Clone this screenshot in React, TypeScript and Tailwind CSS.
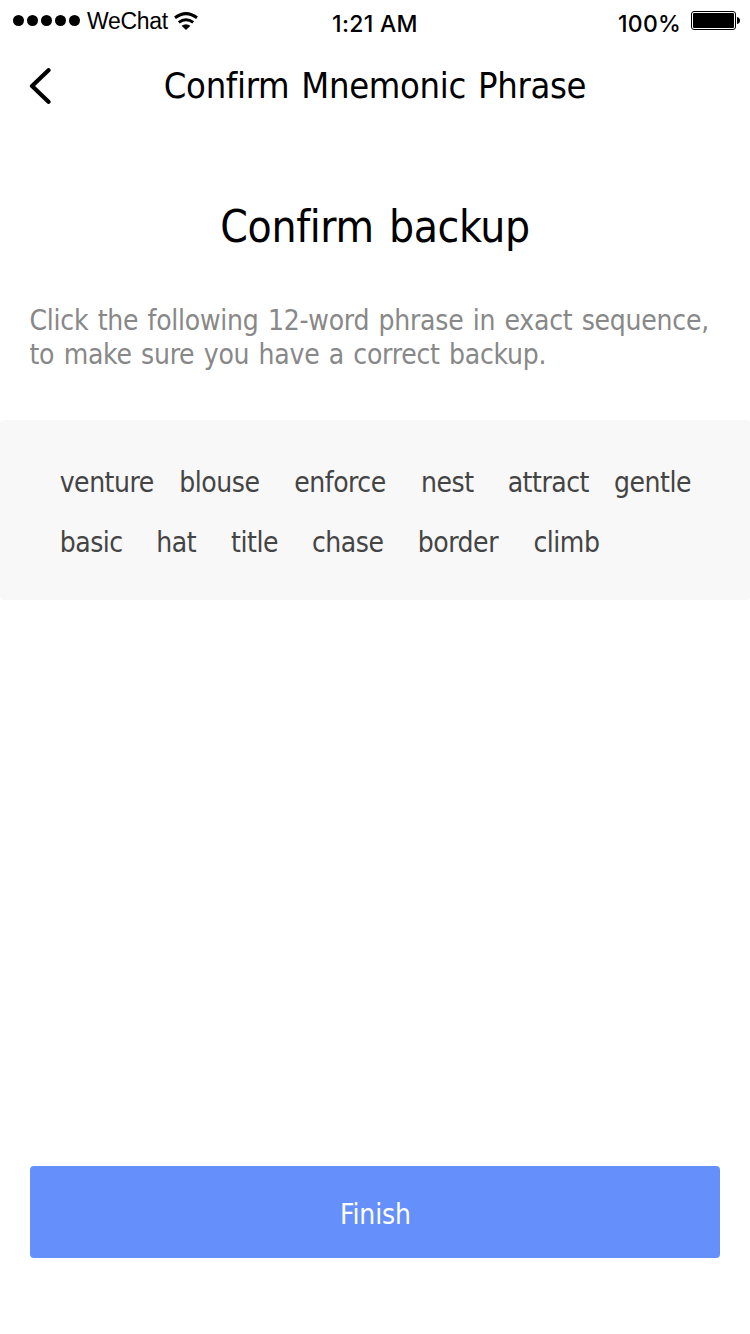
const first = [
  { word: "venture", x: 59.7, w: 94 }, { word: "blouse", x: 179.3, w: 80 }, { word: "enforce", x: 294.3, w: 92 },
  { word: "nest", x: 421, w: 53 }, { word: "attract", x: 507.7, w: 81 }, { word: "gentle", x: 614.1, w: 77 },
];
const second = [
  { word: "basic", x: 59.7, w: 62 }, { word: "hat", x: 156.3, w: 40 }, { word: "title", x: 231.1, w: 47 },
  { word: "chase", x: 312, w: 71 }, { word: "border", x: 417.8, w: 80 }, { word: "climb", x: 533.5, w: 65 },
];

function Row({ items }: { items: typeof first }) {
  return (
    <div className="flex h-[60px] items-center">
      {items.map((i, n) => (
        <button key={i.word} className="shrink-0 text-left tracking-[-0.48px] whitespace-nowrap" style={{ width: i.w, marginLeft: n === 0 ? i.x : i.x - items[n - 1].x - items[n - 1].w }}>
          {i.word}
        </button>
      ))}
    </div>
  );
}

export default function App() {
  return (
    <div className="flex h-[1334px] w-[750px] flex-col bg-white font-['DejaVu_Sans_Condensed','DejaVu_Sans',sans-serif] font-stretch-condensed text-black">
      <div className="grid h-10 grid-cols-3 items-start font-['Inter',sans-serif] text-[23px]">
        <div className="flex h-10 items-center gap-[3px] pl-[13px]">
          {[0, 1, 2, 3, 4].map((d) => <span key={d} className="size-[11px] shrink-0 rounded-full bg-black" />)}
          <span className="pt-0.5 pl-1 font-['Liberation_Sans',sans-serif] tracking-[-0.3px]">WeChat</span>
          <svg className="mt-0.5 ml-[3px] h-[18px] w-6 shrink-0" viewBox="0 0 24 18" fill="none" stroke="#000" strokeWidth="3"><path d="M1 5.8Q12-2.6 23 5.8M4.8 10.4Q12 5 19.2 10.4" /><path d="M7.6 13.8Q12 10.6 16.4 13.8L12 18Z" fill="#000" stroke="none" /></svg>
        </div>
        <div className="pt-2 text-center leading-8 font-medium tracking-[0.3px]">1:21 AM</div>
        <div className="flex items-start justify-end pt-2 pr-[10px] leading-8 font-medium">
          <span className="tracking-[0.2px]">100%</span>
          <svg className="mt-[3px] ml-[10px] h-5 w-[49px]" viewBox="0 0 49 20"><rect x="0.5" y="0.5" width="44" height="18" rx="2.5" fill="none" stroke="#000" /><rect x="2" y="2" width="41" height="15" rx="1" /><path d="M46 6Q49 6.5 49 9.5Q49 12.5 46 13Z" /></svg>
        </div>
      </div>
      <div className="grid h-[92px] grid-cols-[1fr_auto_1fr] items-center">
        <svg className="ml-[29px] h-9 w-[22px]" viewBox="0 0 22 36" fill="none" stroke="#000" strokeWidth="4.2" strokeLinecap="round" strokeLinejoin="round"><path d="M19.5 2.2L3 18L19.5 33.8" /></svg>
        <h1 className="text-[36px] tracking-[-0.3px] [word-spacing:2px]">Confirm Mnemonic Phrase</h1>
      </div>
      <h2 className="h-[170px] pt-[62px] text-center text-[44px] tracking-[-0.35px] [word-spacing:3px]">Confirm backup</h2>
      <p className="h-[118px] pt-0.5 pl-[29.5px] text-[28px] leading-[34px] tracking-[-0.25px] whitespace-nowrap text-[#888] [word-spacing:1.6px]">Click the following 12-word phrase in exact sequence,<br />to make sure you have a correct backup.</p>
      <div className="h-[180px] rounded bg-[#f8f8f8] pt-[33px] text-[28px] text-[#444]"><Row items={first} /><Row items={second} /></div>
      <button className="mx-[30px] mt-auto mb-[76px] h-[92px] rounded bg-[#658ffa] pt-[5px] pl-px text-[28px] tracking-[-0.1px] text-white">Finish</button>
    </div>
  );
}
